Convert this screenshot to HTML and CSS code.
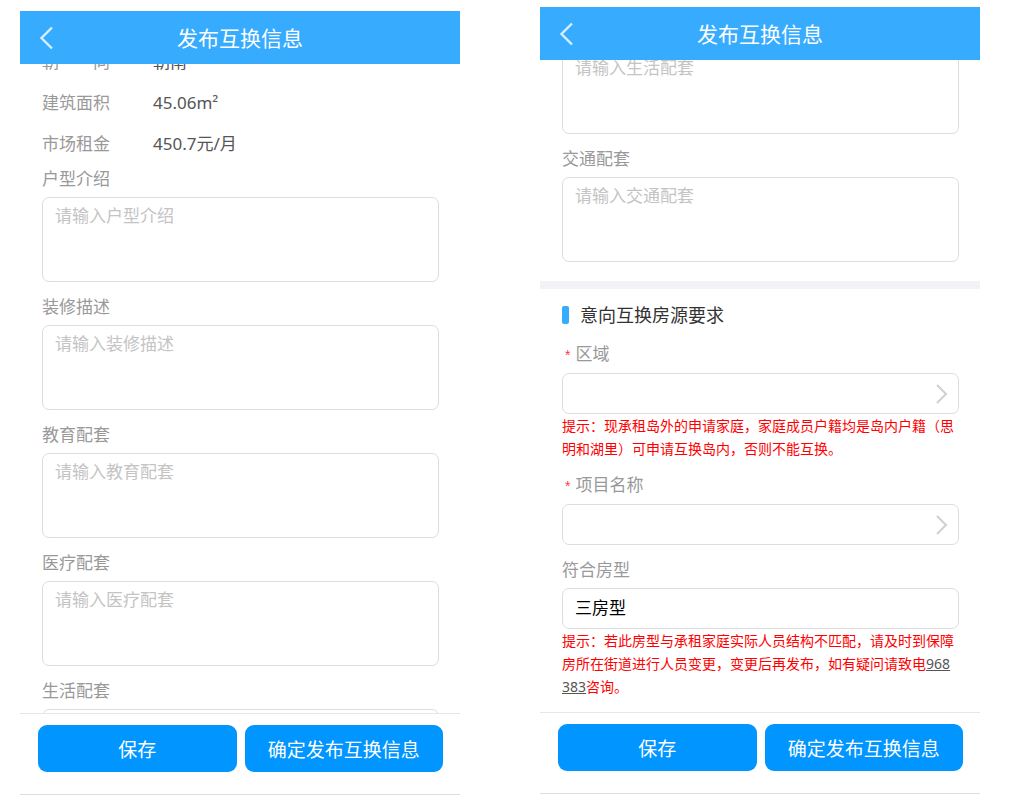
FILE: index.html
```
<!DOCTYPE html>
<html lang="zh-CN">
<head>
    <meta charset="UTF-8">
    <meta name="viewport" content="width=device-width, initial-scale=1.0">
    <title>发布互换信息</title>
    <link rel="stylesheet" href="styles.css">
</head>
<body>
    <div class="screens">
        <!-- 房源信息 -->
        <section class="phone">
            <header class="navbar">
                <button type="button" class="back" aria-label="返回">
                    <svg width="16" height="24" viewBox="0 0 16 24" fill="none" stroke="currentColor" stroke-width="2.4"><path d="M14 1.5L3.5 12L14 22.5"/></svg>
                </button>
                <h1>发布互换信息</h1>
            </header>
            <div class="content">
                <div class="scroll scroll-house">
                    <dl class="info">
                        <div class="info-row"><dt>朝 向</dt><dd>朝南</dd></div>
                        <div class="info-row"><dt>建筑面积</dt><dd>45.06m²</dd></div>
                        <div class="info-row"><dt>市场租金</dt><dd>450.7元/月</dd></div>
                    </dl>
                    <div class="field">
                        <label for="layout">户型介绍</label>
                        <textarea id="layout" placeholder="请输入户型介绍"></textarea>
                    </div>
                    <div class="field">
                        <label for="decoration">装修描述</label>
                        <textarea id="decoration" placeholder="请输入装修描述"></textarea>
                    </div>
                    <div class="field">
                        <label for="education">教育配套</label>
                        <textarea id="education" placeholder="请输入教育配套"></textarea>
                    </div>
                    <div class="field">
                        <label for="medical">医疗配套</label>
                        <textarea id="medical" placeholder="请输入医疗配套"></textarea>
                    </div>
                    <div class="field">
                        <label for="life">生活配套</label>
                        <textarea id="life"></textarea>
                    </div>
                </div>
            </div>
            <footer class="actions">
                <button type="button">保存</button>
                <button type="button">确定发布互换信息</button>
            </footer>
        </section>

        <!-- 意向互换房源要求 -->
        <section class="phone phone-second">
            <header class="navbar">
                <button type="button" class="back" aria-label="返回">
                    <svg width="16" height="24" viewBox="0 0 16 24" fill="none" stroke="currentColor" stroke-width="2.4"><path d="M14 1.5L3.5 12L14 22.5"/></svg>
                </button>
                <h1>发布互换信息</h1>
            </header>
            <div class="content">
                <div class="scroll scroll-target">
                    <div class="field">
                        <textarea aria-label="生活配套" placeholder="请输入生活配套"></textarea>
                    </div>
                    <div class="field">
                        <label for="traffic">交通配套</label>
                        <textarea id="traffic" placeholder="请输入交通配套"></textarea>
                    </div>
                    <div class="divider"></div>
                    <h2>意向互换房源要求</h2>
                    <div class="field">
                        <label for="area" class="required">区域</label>
                        <div class="picker">
                            <select id="area"><option></option></select>
                            <svg width="12" height="20" viewBox="0 0 12 20" fill="none" stroke="currentColor" stroke-width="2"><path d="M1 1l9 9-9 9"/></svg>
                        </div>
                        <p class="hint">提示：现承租岛外的申请家庭，家庭成员户籍均是岛内户籍（思明和湖里）可申请互换岛内，否则不能互换。</p>
                    </div>
                    <div class="field">
                        <label for="project" class="required">项目名称</label>
                        <div class="picker">
                            <select id="project"><option></option></select>
                            <svg width="12" height="20" viewBox="0 0 12 20" fill="none" stroke="currentColor" stroke-width="2"><path d="M1 1l9 9-9 9"/></svg>
                        </div>
                    </div>
                    <div class="field">
                        <label for="house-type">符合房型</label>
                        <input type="text" id="house-type" value="三房型" readonly>
                        <p class="hint">提示：若此房型与承租家庭实际人员结构不匹配，请及时到保障房所在街道进行人员变更，变更后再发布，如有疑问请致电<a href="tel:968383">968383</a>咨询。</p>
                    </div>
                </div>
            </div>
            <footer class="actions">
                <button type="button">保存</button>
                <button type="button">确定发布互换信息</button>
            </footer>
        </section>
    </div>
</body>
</html>
```
FILE: styles.css
```
* {
    box-sizing: border-box;
}
body {
    margin: 0;
    background: #fff;
    color: #555;
    font-family: "Noto Sans", "Noto Sans CJK SC", sans-serif;
    font-size: 17px;
}
button, input, select, textarea {
    font: inherit;
}
h1, h2, p, dl, dd {
    margin: 0;
    font-weight: normal;
}
.screens {
    display: grid;
    grid-template-columns: 1fr 1fr;
    gap: 80px;
    height: 100vh;
    padding: 0 29px 0 20px;
}
.phone {
    display: flex;
    flex-direction: column;
    min-width: 0;
    min-height: 0;
    margin: 11px 0 15px;
    border-bottom: 1px solid #ddd;
}
.phone-second {
    margin: 7px 0 16px;
}

/* 顶部导航 */
.navbar {
    display: grid;
    grid-template-columns: 1fr auto 1fr;
    align-items: center;
    flex-shrink: 0;
    height: 53px;
    padding: 0 18px;
    background: #37acff;
    color: #fff;
}
.navbar h1 {
    font-size: 21px;
    line-height: 30px;
}
.back {
    display: flex;
    justify-self: start;
    padding: 0;
    border: none;
    background: none;
    color: #d5eeff;
    cursor: pointer;
}

/* 滚动区域 */
.content {
    flex: 1;
    min-height: 0;
    overflow: hidden;
}
.scroll-house {
    margin-top: -23px;
}
.scroll-target {
    margin-top: -11px;
}
.info {
    padding: 0 22px;
}
.info-row {
    display: flex;
    gap: 43px;
    line-height: 41px;
}
.info-row dt {
    width: 68px;
    color: #999;
    text-align-last: justify;
}

/* 表单 */
.field {
    padding: 0 21px 10px 22px;
}
.field label {
    display: block;
    margin-bottom: 3px;
    color: #999;
    line-height: 30px;
}
.field .required::before {
    content: "*";
    margin: 0 5px 0 3px;
    color: #ff3b3b;
    font-family: "Liberation Sans", sans-serif;
    font-size: 14px;
}
textarea, input, select {
    display: block;
    width: 100%;
    border: 1px solid #ddd;
    border-radius: 7px;
    background: #fff;
    color: #000;
    outline: none;
}
textarea {
    height: 85px;
    padding: 6px 12px;
    line-height: 24px;
    resize: none;
}
textarea::placeholder {
    color: #c4c4c4;
}
input, select {
    height: 41px;
    padding: 0 12px 4px;
}
select {
    appearance: none;
}
.picker {
    position: relative;
}
.picker svg {
    position: absolute;
    top: 11px;
    right: 11px;
    color: #d0d0d0;
    pointer-events: none;
}
.hint {
    padding-right: 3px;
    color: #f00;
    font-size: 14px;
    line-height: 23px;
    word-break: break-all;
}
.hint a {
    color: #555;
}
.divider {
    height: 8px;
    margin-top: 9px;
    background: #f3f3f7;
}
h2 {
    display: flex;
    align-items: center;
    gap: 11px;
    padding: 12px 22px 10px;
    color: #333;
    font-size: 18px;
    line-height: 28px;
}
h2::before {
    content: "";
    width: 7px;
    height: 18px;
    border-radius: 2px;
    background: #37acff;
}

/* 底部按钮 */
.actions {
    display: flex;
    flex-shrink: 0;
    gap: 8px;
    padding: 11px 17px 22px 18px;
    border-top: 1px solid #e6e6e6;
}
.actions button {
    flex: 1 1 0;
    height: 47px;
    padding: 0;
    border: none;
    border-radius: 9px;
    background: #0095ff;
    color: #fff;
    font-size: 19px;
    cursor: pointer;
}
```
